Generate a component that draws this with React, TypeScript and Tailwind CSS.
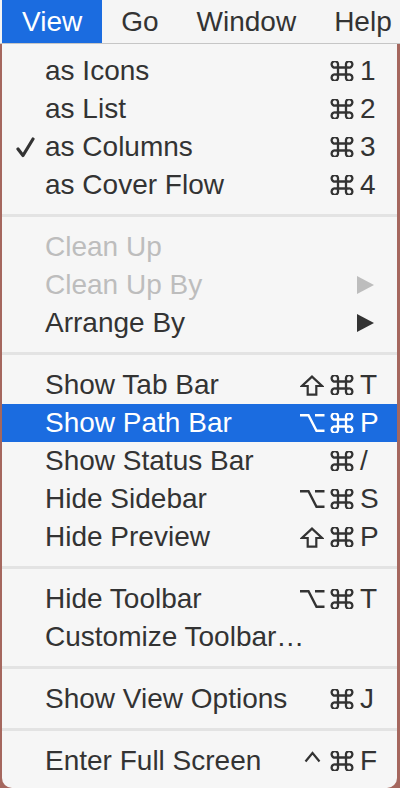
const sans = { fontFamily: '"Liberation Sans", Arial, sans-serif' };

type Item = {
  label: string;
  mods?: string[];
  keyChar?: string;
  checked?: boolean;
  disabled?: boolean;
  submenu?: boolean;
  active?: boolean;
};

const sections: Item[][] = [
  [
    { label: 'as Icons', mods: ['cmd'], keyChar: '1' },
    { label: 'as List', mods: ['cmd'], keyChar: '2' },
    { label: 'as Columns', mods: ['cmd'], keyChar: '3', checked: true },
    { label: 'as Cover Flow', mods: ['cmd'], keyChar: '4' },
  ],
  [
    { label: 'Clean Up', disabled: true },
    { label: 'Clean Up By', disabled: true, submenu: true },
    { label: 'Arrange By', submenu: true },
  ],
  [
    { label: 'Show Tab Bar', mods: ['shift', 'cmd'], keyChar: 'T' },
    { label: 'Show Path Bar', mods: ['opt', 'cmd'], keyChar: 'P', active: true },
    { label: 'Show Status Bar', mods: ['cmd'], keyChar: '/' },
    { label: 'Hide Sidebar', mods: ['opt', 'cmd'], keyChar: 'S' },
    { label: 'Hide Preview', mods: ['shift', 'cmd'], keyChar: 'P' },
  ],
  [
    { label: 'Hide Toolbar', mods: ['opt', 'cmd'], keyChar: 'T' },
    { label: 'Customize Toolbar…' },
  ],
  [{ label: 'Show View Options', mods: ['cmd'], keyChar: 'J' }],
  [{ label: 'Enter Full Screen', mods: ['ctrl', 'cmd'], keyChar: 'F' }],
];

// modifier key glyphs, drawn to match the menu's symbols
function ModKey({ name }: { name: string }) {
  if (name === 'cmd') {
    return (
      <svg width="26" height="20" viewBox="0 0 26 20" fill="none" stroke="currentColor" strokeWidth="2.3">
        <path d="M9 6.5 V13.5 M17 6.5 V13.5 M9 6.5 H17 M9 13.5 H17 M9 6.5 H6.5 A3.2 3.2 0 1 1 9 3.8 V6.5 M17 6.5 V3.8 A3.2 3.2 0 1 1 19.5 6.5 H17 M17 13.5 H19.5 A3.2 3.2 0 1 1 17 16.2 V13.5 M9 13.5 V16.2 A3.2 3.2 0 1 1 6.5 13.5 H9" />
      </svg>
    );
  }
  if (name === 'shift') {
    return (
      <svg width="24" height="21" viewBox="0 0 24 21" fill="none" stroke="currentColor" strokeWidth="2.2" strokeLinejoin="miter">
        <path d="M12 1.6 L22 11 H16.3 V19.6 H7.7 V11 H2 Z" />
      </svg>
    );
  }
  if (name === 'opt') {
    return (
      <svg width="26" height="20" viewBox="0 0 26 20" fill="none" stroke="currentColor" strokeWidth="2.4">
        <path d="M1 2.2 H9.5 L17.5 17.8 H25.5 M16 2.2 H25.5" />
      </svg>
    );
  }
  return (
    <svg width="17" height="20" viewBox="0 0 17 20" fill="none" stroke="currentColor" strokeWidth="2.2">
      <path d="M1.5 10.5 L8.5 2 L15.5 10.5" />
    </svg>
  );
}

function MenuRow({ item }: { item: Item }) {
  const color = item.active
    ? 'text-white bg-[#1b6ce0]'
    : item.disabled
      ? 'text-[#bdbdbd]'
      : 'text-[#333333]';

  return (
    <div className={`flex items-center h-[38px] text-[28px] ${color}`} style={sans}>
      <div className="w-[43px] shrink-0 flex justify-end pr-[10px]">
        {item.checked && (
          <svg width="19" height="21" viewBox="0 0 19 21">
            <path
              d="M2 12 L7 18.5 L17 2"
              fill="none"
              stroke="currentColor"
              strokeWidth="3.2"
              strokeLinecap="round"
              strokeLinejoin="round"
            />
          </svg>
        )}
      </div>
      <span className="flex-1 whitespace-nowrap leading-none">{item.label}</span>
      {item.submenu && (
        <div className="w-[40px] flex items-center mr-[2px]">
          <svg width="17" height="18" viewBox="0 0 17 18" className="ml-[2px]">
            <path d="M0 0 L17 9 L0 18 Z" fill="currentColor" />
          </svg>
        </div>
      )}
      {item.keyChar && (
        <div className="flex items-center">
          {item.mods?.map((m, i) => (
            <span key={i} className="w-[30px] flex justify-center items-center">
              <ModKey name={m} />
            </span>
          ))}
          <span className="w-[40px] pl-[3px] leading-none">{item.keyChar}</span>
        </div>
      )}
    </div>
  );
}

export default function App() {
  return (
    <div className="w-[400px] h-[788px] bg-[#6b3f3a] overflow-hidden flex flex-col">
      <div
        className="h-[44px] shrink-0 bg-[#f5f5f5] border-b border-[#c6c6c6] flex items-stretch pl-[2px] text-[28px] text-[#333333]"
        style={sans}
      >
        <div className="px-[20px] bg-[#1b6ce0] text-white flex items-center">View</div>
        <div className="px-[19px] flex items-center">Go</div>
        <div className="px-[19px] flex items-center">Window</div>
        <div className="px-[19px] flex items-center">Help</div>
      </div>
      <div className="flex-1 bg-[#a5675e] pl-[2px] pr-[3px]">
        <div className="bg-[#f6f6f6] h-full rounded-b-[10px] pt-[8px] pb-[8px]">
          {sections.map((sec, si) => (
            <div key={si}>
              {si > 0 && (
                <div className="pt-[10px] pb-[11px]">
                  <div className="h-[3px] bg-[#e3e3e3]" />
                </div>
              )}
              {sec.map((item, ii) => (
                <MenuRow key={ii} item={item} />
              ))}
            </div>
          ))}
        </div>
      </div>
    </div>
  );
}
